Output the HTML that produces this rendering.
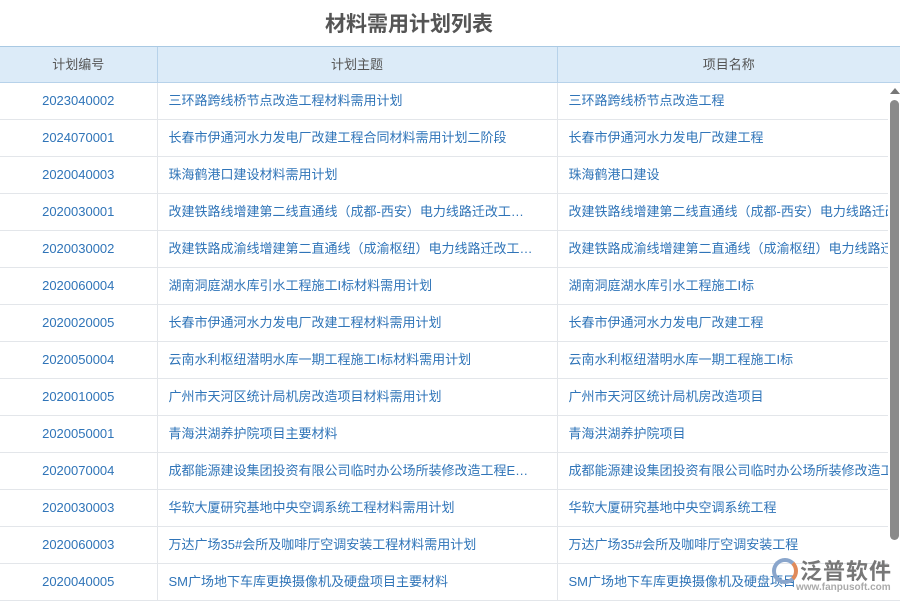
<!DOCTYPE html>
<html><head><meta charset="utf-8"><style>
body{margin:0;width:900px;height:600px;overflow:hidden;background:#fff;font-family:"Liberation Sans","Noto Sans CJK SC",sans-serif;position:relative}
.title{position:absolute;top:8px;left:0;width:818px;text-align:center;font-size:21px;font-weight:bold;color:#555}
table{position:absolute;top:46px;left:0;border-collapse:collapse;table-layout:fixed;width:900px}
td,th{height:36px;border-bottom:1px solid #e3e6ea;font-size:13px;line-height:16px;white-space:nowrap;overflow:hidden;padding:0;vertical-align:middle}
th{height:35px;background:#dcebf8;color:#555;font-weight:normal;border-top:1px solid #a9c9e3;border-bottom:1px solid #b7d2ea;border-left:1px solid #b7d2ea}
th:first-child{border-left:none}
td{color:#2f74b8;padding-left:11px;text-overflow:clip}
td:first-child{text-align:center;padding-left:0}
td:nth-child(2){border-left:1px solid #e3e6ea;text-overflow:ellipsis;padding-right:22px}
td:nth-child(3){border-left:1px solid #e3e6ea}
.mask{position:absolute;left:888px;top:84px;width:12px;height:516px;background:#fff}
.sb{position:absolute;left:890px;top:100px;width:9px;height:440px;background:#8a8a8a;border-radius:5px}
.arr{position:absolute;left:890px;top:88px;width:0;height:0;border-left:5px solid transparent;border-right:5px solid transparent;border-bottom:6px solid #777}
.logo{position:absolute;left:800px;top:554px;font-size:22px;color:#777;font-weight:bold;letter-spacing:1px}
.url{position:absolute;left:796px;top:582px;font-size:10px;color:#aaa;font-weight:bold}
.circ{position:absolute;left:772px;top:558px;width:18px;height:18px;border-radius:50%;border:4px solid #8aa6cc;border-right-color:#e08a5a}
</style></head><body>
<div class="title">材料需用计划列表</div>
<table>
<colgroup><col style="width:157px"><col style="width:400px"><col style="width:343px"></colgroup>
<tr><th>计划编号</th><th>计划主题</th><th>项目名称</th></tr>
<tr><td>2023040002</td><td>三环路跨线桥节点改造工程材料需用计划</td><td>三环路跨线桥节点改造工程</td></tr>
<tr><td>2024070001</td><td>长春市伊通河水力发电厂改建工程合同材料需用计划二阶段</td><td>长春市伊通河水力发电厂改建工程</td></tr>
<tr><td>2020040003</td><td>珠海鹤港口建设材料需用计划</td><td>珠海鹤港口建设</td></tr>
<tr><td>2020030001</td><td>改建铁路线增建第二线直通线（成都-西安）电力线路迁改工程材料需用计划</td><td>改建铁路线增建第二线直通线（成都-西安）电力线路迁改</td></tr>
<tr><td>2020030002</td><td>改建铁路成渝线增建第二直通线（成渝枢纽）电力线路迁改工程材料需用计划</td><td>改建铁路成渝线增建第二直通线（成渝枢纽）电力线路迁改</td></tr>
<tr><td>2020060004</td><td>湖南洞庭湖水库引水工程施工I标材料需用计划</td><td>湖南洞庭湖水库引水工程施工I标</td></tr>
<tr><td>2020020005</td><td>长春市伊通河水力发电厂改建工程材料需用计划</td><td>长春市伊通河水力发电厂改建工程</td></tr>
<tr><td>2020050004</td><td>云南水利枢纽潜明水库一期工程施工I标材料需用计划</td><td>云南水利枢纽潜明水库一期工程施工I标</td></tr>
<tr><td>2020010005</td><td>广州市天河区统计局机房改造项目材料需用计划</td><td>广州市天河区统计局机房改造项目</td></tr>
<tr><td>2020050001</td><td>青海洪湖养护院项目主要材料</td><td>青海洪湖养护院项目</td></tr>
<tr><td>2020070004</td><td>成都能源建设集团投资有限公司临时办公场所装修改造工程EPC总承包项目材料</td><td>成都能源建设集团投资有限公司临时办公场所装修改造工</td></tr>
<tr><td>2020030003</td><td>华软大厦研究基地中央空调系统工程材料需用计划</td><td>华软大厦研究基地中央空调系统工程</td></tr>
<tr><td>2020060003</td><td>万达广场35#会所及咖啡厅空调安装工程材料需用计划</td><td>万达广场35#会所及咖啡厅空调安装工程</td></tr>
<tr><td>2020040005</td><td>SM广场地下车库更换摄像机及硬盘项目主要材料</td><td>SM广场地下车库更换摄像机及硬盘项目</td></tr>
</table>
<div class="mask"></div>
<div class="arr"></div><div class="sb"></div>
<div class="circ"></div>
<div class="logo">泛普软件</div>
<div class="url">www.fanpusoft.com</div>
</body></html>
